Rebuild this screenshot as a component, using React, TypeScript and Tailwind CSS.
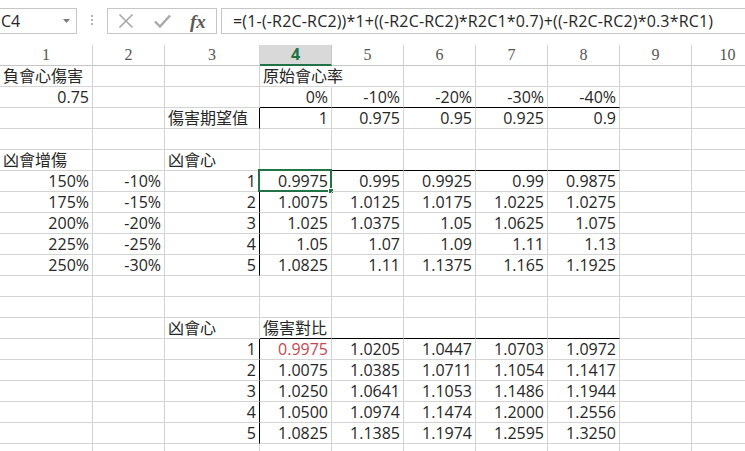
import React from 'react'

const widths = [93, 72, 95, 72, 72, 72, 72, 72, 72, 72]
const gridCols = 'grid grid-cols-[93px_72px_95px_72px_72px_72px_72px_72px_72px_72px]'
const font = { fontFamily: '"Open Sans", "Noto Sans CJK TC", sans-serif' }

const E = ''
const rows: string[][] = [
  ['負會心傷害', E, E, '原始會心率', E, E, E, E, E, E],
  ['0.75', E, E, '0%', '-10%', '-20%', '-30%', '-40%', E, E],
  [E, E, '傷害期望值', '1', '0.975', '0.95', '0.925', '0.9', E, E],
  [E, E, E, E, E, E, E, E, E, E],
  ['凶會增傷', E, '凶會心', E, E, E, E, E, E, E],
  ['150%', '-10%', '1', '0.9975', '0.995', '0.9925', '0.99', '0.9875', E, E],
  ['175%', '-15%', '2', '1.0075', '1.0125', '1.0175', '1.0225', '1.0275', E, E],
  ['200%', '-20%', '3', '1.025', '1.0375', '1.05', '1.0625', '1.075', E, E],
  ['225%', '-25%', '4', '1.05', '1.07', '1.09', '1.11', '1.13', E, E],
  ['250%', '-30%', '5', '1.0825', '1.11', '1.1375', '1.165', '1.1925', E, E],
  [E, E, E, E, E, E, E, E, E, E],
  [E, E, E, E, E, E, E, E, E, E],
  [E, E, '凶會心', '傷害對比', E, E, E, E, E, E],
  [E, E, '1', '0.9975', '1.0205', '1.0447', '1.0703', '1.0972', E, E],
  [E, E, '2', '1.0075', '1.0385', '1.0711', '1.1054', '1.1417', E, E],
  [E, E, '3', '1.0250', '1.0641', '1.1053', '1.1486', '1.1944', E, E],
  [E, E, '4', '1.0500', '1.0974', '1.1474', '1.2000', '1.2556', E, E],
  [E, E, '5', '1.0825', '1.1385', '1.1974', '1.2595', '1.3250', E, E],
  [E, E, E, E, E, E, E, E, E, E],
]

// rows (0-based) whose bottom edge is a black border across columns 4..8
const blackBottom = [1, 4, 12]
// rows whose column 3 / column 4 edge is black
const blackLeft = [2, 5, 6, 7, 8, 9, 13, 14, 15, 16, 17]

function Cell({ text, r, c }: { text: string; r: number; c: number }) {
  const numeric = /^[-\d.%]+$/.test(text)
  const bottomBlack = blackBottom.includes(r) && c >= 3 && c <= 7
  const rightBlack = blackLeft.includes(r) && c === 2
  const hideRight = r === 0 && c === 3
  const selected = r === 5 && c === 3
  const red = r === 13 && c === 3

  return (
    <div
      className={`relative h-[21px] border-b border-r px-[3px] text-[16px] leading-[21px] whitespace-nowrap ${
        numeric ? 'text-right' : 'text-left'
      } ${bottomBlack ? 'border-b-black' : 'border-b-[#d4d4d4]'} ${
        rightBlack ? 'border-r-black' : hideRight ? 'border-r-transparent' : 'border-r-[#d4d4d4]'
      } ${red ? 'text-[#c9464f]' : 'text-[#262626]'}`}
    >
      {text}
      {selected && (
        <div className="absolute -left-[2px] -top-[2px] h-[23px] w-[74px] border-2 border-[#217346]">
          <div className="absolute -bottom-[4px] -right-[4px] h-[6px] w-[6px] border border-white bg-[#217346]" />
        </div>
      )}
    </div>
  )
}

export default function App() {
  return (
    <div className="h-[451px] w-[745px] overflow-hidden bg-white" style={font}>
      {/* formula bar */}
      <div className="flex h-[45px] items-start pt-[8px]">
        <div className="relative flex h-[26px] w-[77px] shrink-0 items-center border border-l-0 border-[#c6c6c6] pl-[1px] text-[16px] text-[#262626]">
          C4
          <svg className="absolute left-[63px] top-[10px]" width="7" height="4" viewBox="0 0 7 4">
            <path d="M0 0h7L3.5 4z" fill="#7a7a7a" />
          </svg>
        </div>
        <div className="flex w-[30px] shrink-0 flex-col items-center gap-[2px] pt-[7px]">
          <span className="h-[2px] w-[2px] bg-[#b5b5b5]" />
          <span className="h-[2px] w-[2px] bg-[#b5b5b5]" />
          <span className="h-[2px] w-[2px] bg-[#b5b5b5]" />
        </div>
        <div className="flex h-[26px] w-[110px] shrink-0 items-center border border-[#c6c6c6]">
          <svg className="ml-[10px]" width="16" height="16" viewBox="0 0 16 16">
            <path d="M1.5 1.5l13 13M14.5 1.5l-13 13" stroke="#a8a8a8" strokeWidth="1.6" />
          </svg>
          <svg className="ml-[20px]" width="17" height="14" viewBox="0 0 17 14">
            <path d="M1 7.5l5 5L16 1.5" stroke="#a8a8a8" strokeWidth="2.4" fill="none" />
          </svg>
          <span
            className="ml-[19px] text-[19px] font-bold italic leading-none text-[#5a5a5a]"
            style={{ fontFamily: '"Liberation Serif", serif' }}
          >
            fx
          </span>
        </div>
        <div className="ml-[4px] flex h-[26px] flex-1 items-center border border-r-0 border-[#c6c6c6] pl-[11px] text-[16px] tracking-[0.18px] whitespace-nowrap text-[#262626]">
          =(1-(-R2C-RC2))*1+((-R2C-RC2)*R2C1*0.7)+((-R2C-RC2)*0.3*RC1)
        </div>
      </div>

      {/* column headers */}
      <div className={gridCols}>
        {widths.map((_, i) => (
          <div
            key={i}
            className={`h-[21px] border-r text-center text-[16px] leading-[19px] ${
              i === 3
                ? 'border-b-2 border-b-[#217346] border-r-[#c6c6c6] bg-[#d9d9d9] font-bold text-[#217346]'
                : 'border-b border-b-[#c6c6c6] border-r-[#d4d4d4] text-[#555]'
            }`}
            style={i === 3 ? font : { fontFamily: '"Liberation Serif", serif' }}
          >
            {i + 1}
          </div>
        ))}
      </div>

      {/* cells */}
      {rows.map((row, r) => (
        <div key={r} className={gridCols}>
          {row.map((t, c) => (
            <Cell key={c} text={t} r={r} c={c} />
          ))}
        </div>
      ))}
    </div>
  )
}
